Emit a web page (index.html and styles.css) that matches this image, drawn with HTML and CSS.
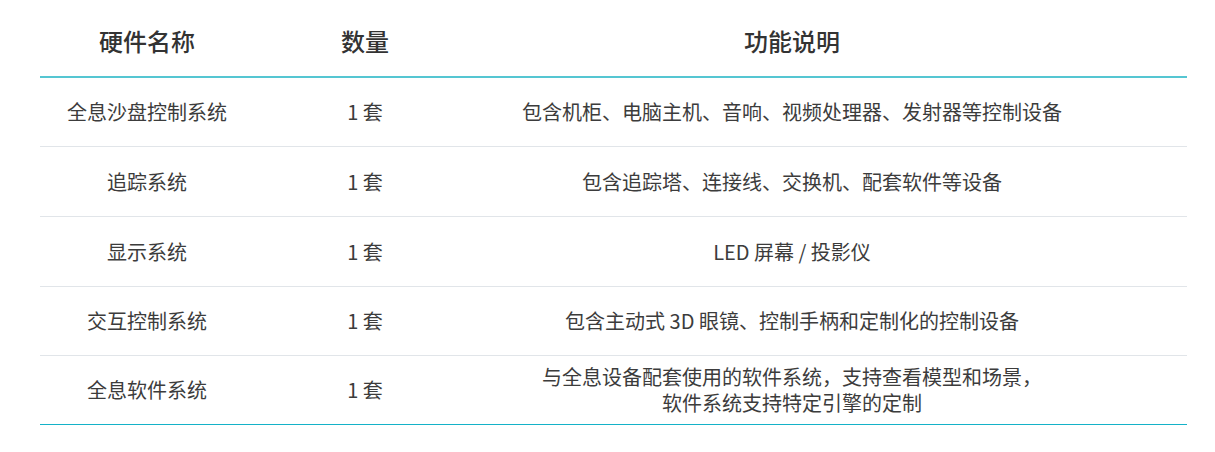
FILE: index.html
```html
<!DOCTYPE html>
<html lang="zh-CN">
<head>
<meta charset="utf-8">
<title>硬件清单</title>
<link rel="stylesheet" href="styles.css">
</head>
<body>
<div class="wrap">
  <table class="hw">
    <colgroup>
      <col class="c1"><col class="c2"><col class="c3">
    </colgroup>
    <thead>
      <tr>
        <th>硬件名称</th>
        <th>数量</th>
        <th class="desc">功能说明</th>
      </tr>
    </thead>
    <tbody>
      <tr class="short">
        <td>全息沙盘控制系统</td>
        <td>1 套</td>
        <td class="desc">包含机柜、电脑主机、音响、视频处理器、发射器等控制设备</td>
      </tr>
      <tr>
        <td>追踪系统</td>
        <td>1 套</td>
        <td class="desc">包含追踪塔、连接线、交换机、配套软件等设备</td>
      </tr>
      <tr>
        <td>显示系统</td>
        <td>1 套</td>
        <td class="desc">LED 屏幕 / 投影仪</td>
      </tr>
      <tr class="short">
        <td>交互控制系统</td>
        <td>1 套</td>
        <td class="desc">包含主动式 3D 眼镜、控制手柄和定制化的控制设备</td>
      </tr>
      <tr class="short last">
        <td>全息软件系统</td>
        <td>1 套</td>
        <td class="desc"><span class="line">与全息设备配套使用的软件系统，支持查看模型和场景，</span><span class="line">软件系统支持特定引擎的定制</span></td>
      </tr>
    </tbody>
  </table>
</div>
</body>
</html>
```
FILE: styles.css
```css
html, body {
  margin: 0;
  padding: 0;
  background: #ffffff;
}

.wrap {
  padding: 0 28px 0 40px;
}

.hw {
  width: 1147px;
  border-collapse: separate;
  border-spacing: 0;
  table-layout: fixed;
  font-family: "Noto Sans CJK SC", "Noto Sans", sans-serif;
}

.hw .c1 { width: 214px; }
.hw .c2 { width: 222px; }
.hw .c3 { width: 711px; }

.hw th {
  height: 70px;
  padding: 6px 0 0;
  font-size: 24px;
  font-weight: 500;
  color: #333333;
  text-align: center;
  vertical-align: middle;
  border-bottom: 2px solid #55c6d2;
  line-height: 30px;
}

.hw td {
  height: 69px;
  padding: 0;
  font-size: 20px;
  font-weight: 400;
  color: #3c3c3c;
  text-align: center;
  vertical-align: middle;
  line-height: 26px;
  border-bottom: 1px solid #e1e5e9;
}

.hw tr.short td {
  height: 68px;
}

.hw .desc {
  padding-right: 79px;
}

.hw .line {
  display: block;
}

.hw tr.last td {
  border-bottom: 1px solid #14b2c8;
}
```
